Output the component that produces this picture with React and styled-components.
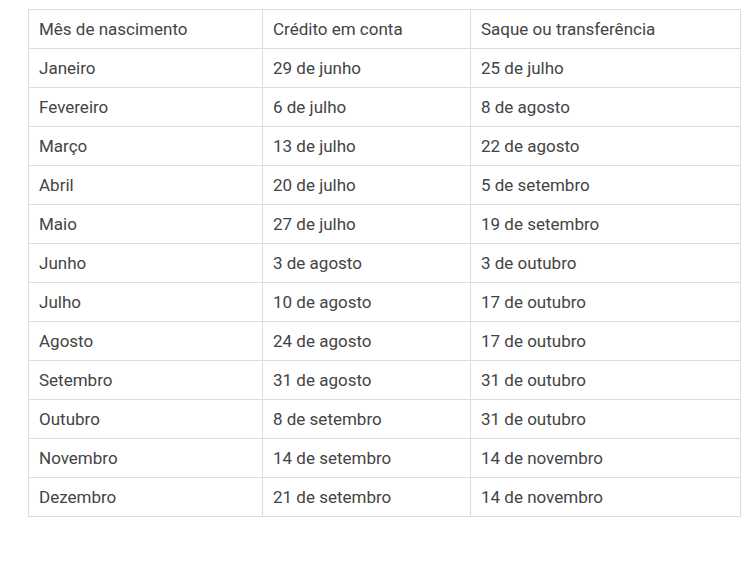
import React from 'react'
import styled, { createGlobalStyle } from 'styled-components'

const GlobalStyle = createGlobalStyle`
    html, body {
        margin: 0;
        background: #fff;
    }
    body {
        font-family: Roboto, "Liberation Sans", sans-serif;
    }
`

const Page = styled.div`
    padding: 9px 0 0 28px;
`

const Table = styled.table`
    border-collapse: collapse;
    table-layout: fixed;
    width: 712px;
    color: #444;
    font-size: 17px;
`

const Col = styled.col`
    width: ${ props => props.$w }px;
`

const Cell = styled.td`
    border: 1px solid #ddd;
    padding: 8px 10px;
    line-height: 22px;
    white-space: nowrap;
    text-align: left;
    font-weight: 400;
`

const widths = [ 234, 208, 270 ]

const rows = [
    [ 'Mês de nascimento', 'Crédito em conta', 'Saque ou transferência' ],
    [ 'Janeiro', '29 de junho', '25 de julho' ],
    [ 'Fevereiro', '6 de julho', '8 de agosto' ],
    [ 'Março', '13 de julho', '22 de agosto' ],
    [ 'Abril', '20 de julho', '5 de setembro' ],
    [ 'Maio', '27 de julho', '19 de setembro' ],
    [ 'Junho', '3 de agosto', '3 de outubro' ],
    [ 'Julho', '10 de agosto', '17 de outubro' ],
    [ 'Agosto', '24 de agosto', '17 de outubro' ],
    [ 'Setembro', '31 de agosto', '31 de outubro' ],
    [ 'Outubro', '8 de setembro', '31 de outubro' ],
    [ 'Novembro', '14 de setembro', '14 de novembro' ],
    [ 'Dezembro', '21 de setembro', '14 de novembro' ],
]

export default function App() {
    return (
        <Page>
            <GlobalStyle />
            <Table>
                <colgroup>
                    { widths.map(( w, i ) => <Col key={ i } $w={ w } />) }
                </colgroup>
                <tbody>
                    {
                        rows.map(( row, i ) => (
                            <tr key={ i }>
                                { row.map(( text, j ) => <Cell key={ j }>{ text }</Cell>) }
                            </tr>
                        ))
                    }
                </tbody>
            </Table>
        </Page>
    )
}
